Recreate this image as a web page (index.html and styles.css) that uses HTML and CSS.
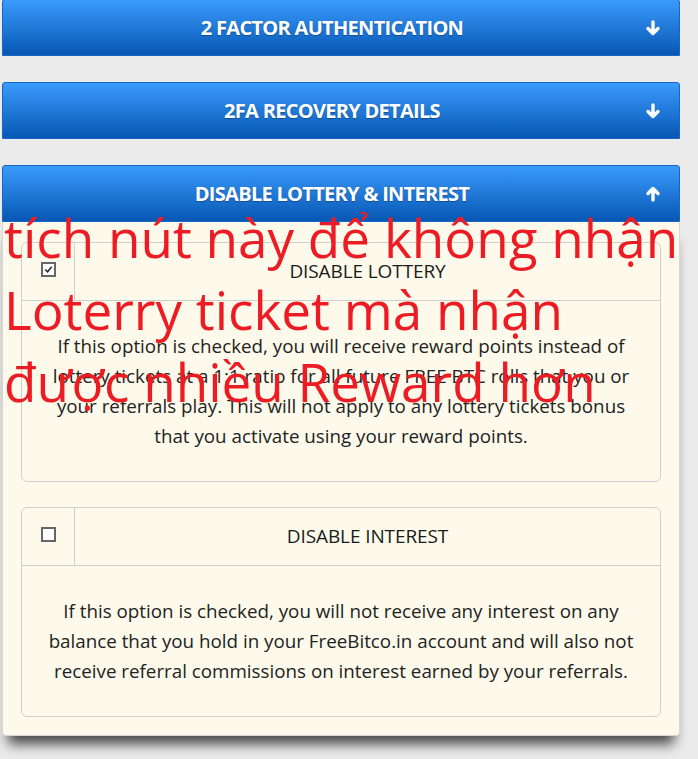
FILE: index.html
```html
<!DOCTYPE html>
<html lang="en">
<head>
  <meta charset="UTF-8" />
  <meta name="viewport" content="width=device-width, initial-scale=1.0"/>
  <title>Settings</title>
  <link rel="stylesheet" href="styles.css">
</head>
<body>
  <div class="page">
    <div class="section">
      <div class="bar">
        <span class="bar-title">2 FACTOR AUTHENTICATION</span>
        <svg class="arrow" viewBox="0 0 16 16"><path d="M8 2 V13 M3 8.5 L8 13.5 L13 8.5"/></svg>
      </div>
    </div>

    <div class="section">
      <div class="bar">
        <span class="bar-title">2FA RECOVERY DETAILS</span>
        <svg class="arrow" viewBox="0 0 16 16"><path d="M8 2 V13 M3 8.5 L8 13.5 L13 8.5"/></svg>
      </div>
    </div>

    <div class="section">
      <div class="bar">
        <span class="bar-title">DISABLE LOTTERY &amp; INTEREST</span>
        <svg class="arrow" viewBox="0 0 16 16"><path d="M8 14 V3 M3 7.5 L8 2.5 L13 7.5"/></svg>
      </div>
      <div class="panel">
        <div class="option">
          <div class="option-head">
            <div class="check-cell">
              <span class="box checked"><svg viewBox="0 0 12 12"><path d="M2.5 6 L5 8.5 L9.5 3"/></svg></span>
            </div>
            <div class="option-title">DISABLE LOTTERY</div>
          </div>
          <p class="option-text">If this option is checked, you will receive reward points instead of lottery tickets at a 1:1 ratio for all future FREE BTC rolls that you or your referrals play. This will not apply to any lottery tickets bonus that you activate using your reward points.</p>
        </div>

        <div class="option">
          <div class="option-head">
            <div class="check-cell">
              <span class="box"></span>
            </div>
            <div class="option-title">DISABLE INTEREST</div>
          </div>
          <p class="option-text">If this option is checked, you will not receive any interest on any balance that you hold in your FreeBitco.in account and will also not receive referral commissions on interest earned by your referrals.</p>
        </div>
      </div>
    </div>

    <div class="note">tích nút này để không nhận<br>Loterry ticket mà nhận<br>được nhiều Reward hơn</div>
  </div>
</body>
</html>
```

FILE: styles.css
```css
body {
  margin: 0;
  background: #ebebeb;
  font-family: 'Open Sans', sans-serif;
  color: #222;
}

.page {
  position: relative;
  width: 678px;
  margin-left: 2px;
}

.section {
  margin-bottom: 26px;
}

.section:first-child {
  margin-top: -1px;
}

.bar {
  box-sizing: border-box;
  height: 57px;
  display: flex;
  align-items: center;
  padding-right: 18px;
  background: linear-gradient(#3a9bfd, #0757b3);
  border: 1px solid #1466c8;
  border-radius: 3px 3px 0 0;
  color: #fff;
}

.bar-title {
  flex: 1;
  text-align: center;
  font-weight: bold;
  font-size: 20px;
  letter-spacing: -0.7px;
  padding-bottom: 1px;
  text-shadow: 0 1px 1px rgba(0, 0, 0, 0.3);
}

.arrow {
  width: 16px;
  height: 16px;
  margin-left: -16px;
  fill: none;
  stroke: #fff;
  stroke-width: 3.4;
  stroke-linecap: round;
  stroke-linejoin: round;
}

.panel {
  background: #fdfaeb;
  border: 1px solid #d6d6d6;
  border-top: none;
  border-radius: 0 0 4px 4px;
  padding: 20px 18px 18px;
  box-shadow: 0 14px 12px -6px rgba(0, 0, 0, 0.7);
}

.option {
  border: 1px solid #cfcfcf;
  border-radius: 6px;
}

.option + .option {
  margin-top: 25px;
}

.option-head {
  display: flex;
  height: 57px;
  border-bottom: 1px solid #cfcfcf;
}

.check-cell {
  width: 53px;
  border-right: 1px solid #cfcfcf;
  display: flex;
  justify-content: center;
  padding-top: 19px;
  box-sizing: border-box;
}

.box {
  box-sizing: border-box;
  width: 15px;
  height: 15px;
  border: 2px solid #666;
  background: #fff;
}

.box svg {
  display: block;
  width: 11px;
  height: 11px;
  fill: none;
  stroke: #222;
  stroke-width: 1.6;
}

.option-title {
  flex: 1;
  display: flex;
  align-items: center;
  justify-content: center;
  padding-bottom: 2px;
  font-size: 19px;
  letter-spacing: -0.1px;
  color: #1a1a1a;
}

.option-text {
  margin: 0;
  padding: 30px 20px;
  text-align: center;
  font-size: 18.8px;
  line-height: 30px;
}

.note {
  position: absolute;
  top: 203px;
  left: 2px;
  font-size: 53px;
  line-height: 72px;
  color: #ed1c24;
  white-space: nowrap;
}
```
